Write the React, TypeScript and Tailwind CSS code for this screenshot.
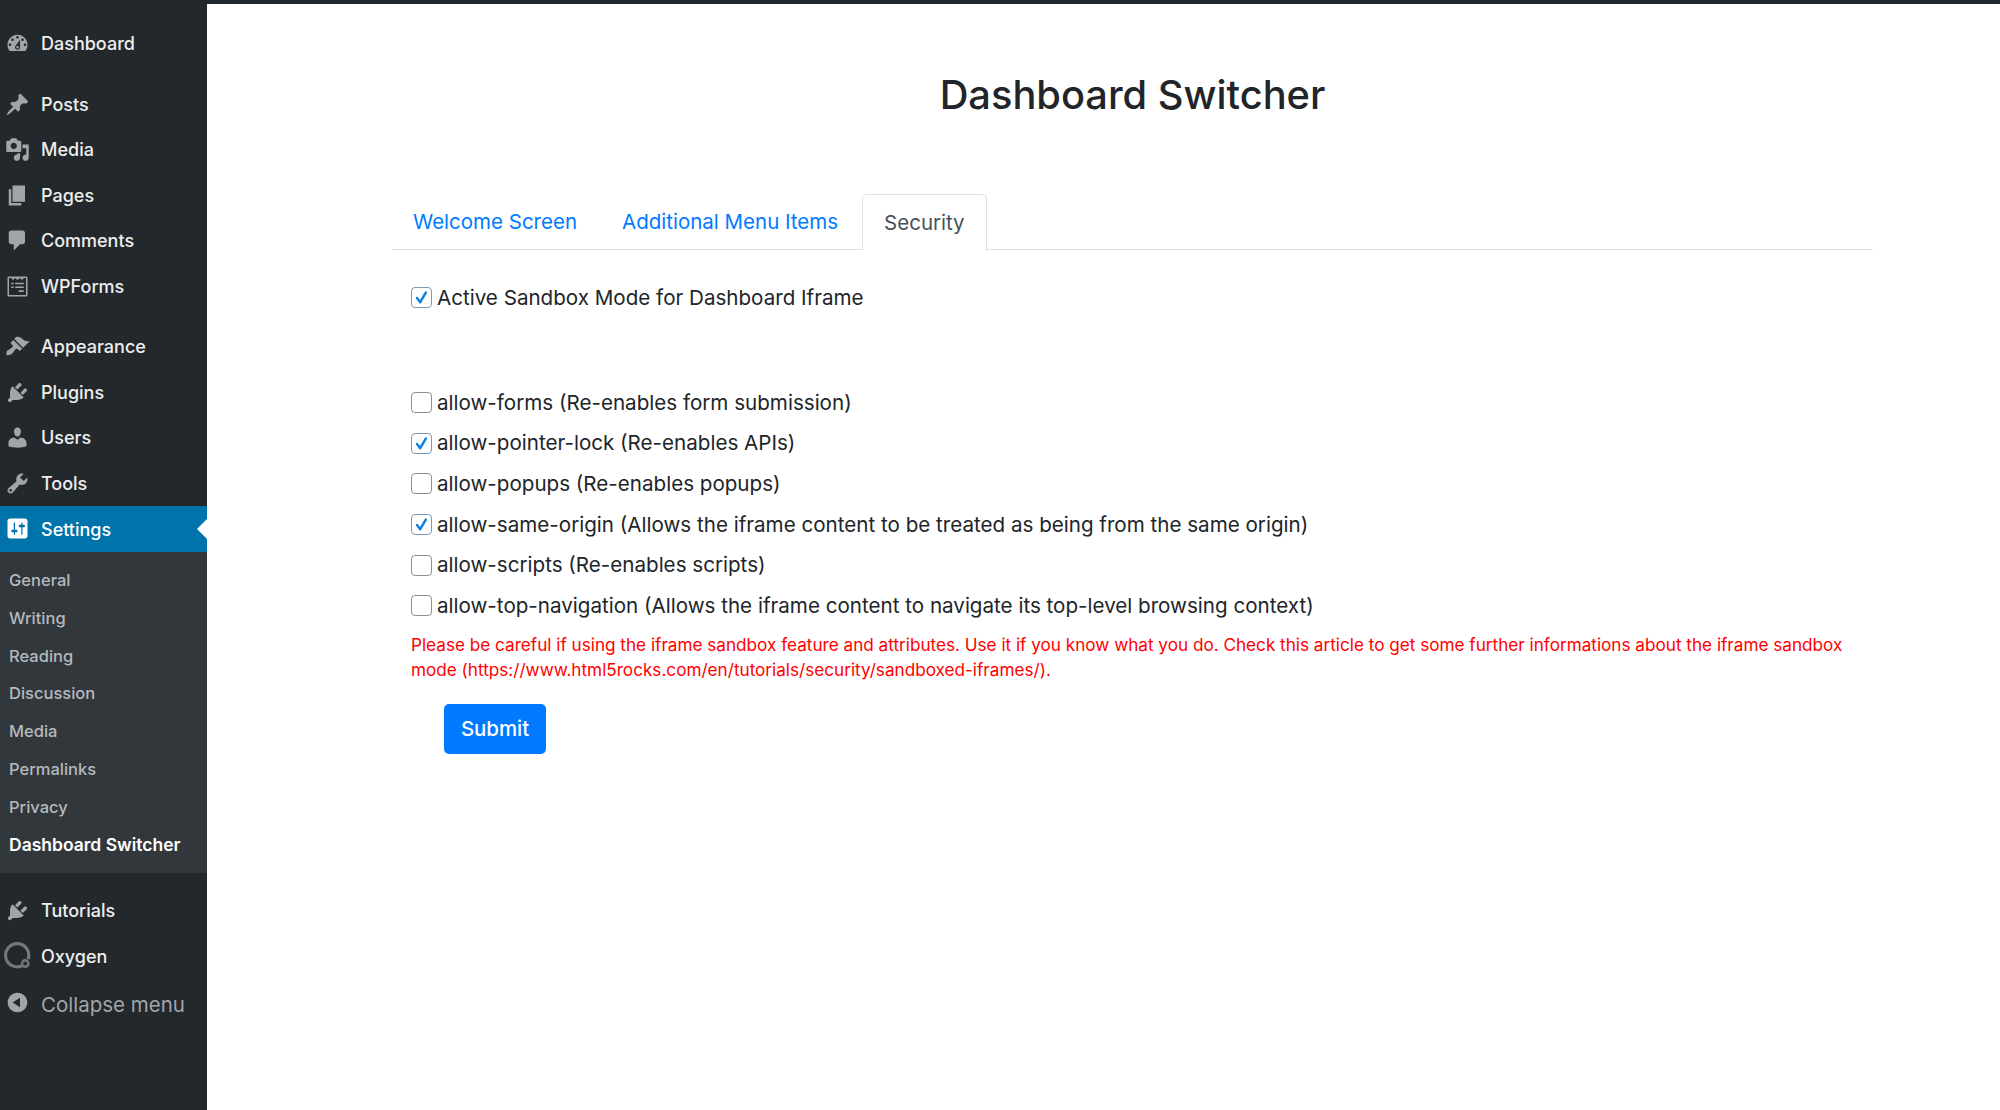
import React from "react";

const P: Record<string, string> = {
  dashboard: "M3.76 16h12.48c1.1-1.37 1.76-3.11 1.76-5 0-4.42-3.58-8-8-8s-8 3.58-8 8c0 1.89.66 3.63 1.76 5zM10 4c.55 0 1 .45 1 1s-.45 1-1 1-1-.45-1-1 .45-1 1-1zM6 6c.55 0 1 .45 1 1s-.45 1-1 1-1-.45-1-1 .45-1 1-1zm8 0c.55 0 1 .45 1 1s-.45 1-1 1-1-.45-1-1 .45-1 1-1zm-5.37 5.55L12 7v6c0 1.1-.9 2-2 2s-2-.9-2-2c0-.57.24-1.08.63-1.45zM4 10c.55 0 1 .45 1 1s-.45 1-1 1-1-.45-1-1 .45-1 1-1zm12 0c.55 0 1 .45 1 1s-.45 1-1 1-1-.45-1-1 .45-1 1-1zm-5 3c0-.55-.45-1-1-1s-1 .45-1 1 .45 1 1 1 1-.45 1-1z",
  pin: "M10.44 3.02l1.82-1.82 6.36 6.35-1.83 1.82c-1.05-.68-2.48-.57-3.41.36l-.75.75c-.92.93-1.04 2.35-.35 3.41l-1.83 1.82-2.41-2.41-2.8 2.79c-.42.42-3.38 2.71-3.8 2.29s1.86-3.39 2.28-3.81l2.79-2.79L4.1 9.36l1.83-1.82c1.05.69 2.48.57 3.41-.36l.75-.75c.93-.92 1.04-2.35.35-3.41z",
  media: "M13 11V4c0-.55-.45-1-1-1h-1.67L9 1H5L3.67 3H2c-.55 0-1 .45-1 1v7c0 .55.45 1 1 1h10c.55 0 1-.45 1-1zM7 4.5c1.38 0 2.5 1.12 2.5 2.5S8.38 9.5 7 9.5 4.5 8.38 4.5 7 5.62 4.5 7 4.5zM14 6h5v10.5c0 1.38-1.12 2.5-2.5 2.5S14 17.88 14 16.5s1.12-2.5 2.5-2.5c.17 0 .34.02.5.05V9h-3V6zm-4 8.05V13h2v3.5c0 1.38-1.12 2.5-2.5 2.5S7 17.88 7 16.5 8.12 14 9.5 14c.17 0 .34.02.5.05z",
  page: "M6 15V2h10v13H6zm-1 1h8v2H3V5h2v11z",
  comments: "M5 2h9c1.1 0 2 .9 2 2v7c0 1.1-.9 2-2 2h-2l-5 5v-5H5c-1.1 0-2-.9-2-2V4c0-1.1.9-2 2-2z",
  wpforms: "M3 2h14a1 1 0 0 1 1 1v14a1 1 0 0 1-1 1H3a1 1 0 0 1-1-1V3a1 1 0 0 1 1-1zm.2 1.2v13.6h13.6V3.2h-1.6l-1.7 1.6L12 3.2l-2 1.6-2-1.6-1.5 1.6-1.7-1.6H3.2zM5 7h2v1.2H5V7zm3.2 0H15v1.2H8.2V7zM5 10h2v1.2H5V10zm3.2 0H15v1.2H8.2V10zM11 13h4v1.4h-4V13z",
  appearance: "M14.48 11.06L7.41 3.99l1.5-1.5c.5-.56 2.3-.47 3.51.32 1.21.8 1.43 1.28 2.91 2.1 1.18.64 2.45 1.26 4.45.85zm-.71.71L6.7 4.7 4.93 6.47c-.39.39-.39 1.02 0 1.41l1.06 1.06c.39.39.39 1.03 0 1.42-.6.6-1.43 1.11-2.21 1.69-.35.26-.7.53-1.01.84C1.43 13.23.76 14.8 1.2 16.8c2 .44 3.57-.23 4.91-1.57.31-.31.58-.66.84-1.01.58-.78 1.09-1.61 1.69-2.21.39-.39 1.02-.39 1.41 0l1.06 1.06c.39.39 1.02.39 1.41 0z",
  plugins: "M13.11 4.36L9.87 7.6 8 5.73l3.24-3.24c.35-.34 1.05-.2 1.56.32.52.51.66 1.21.31 1.55zm-8 1.77l.91-1.12 9.01 9.01-1.19.84c-.71.71-2.63 1.16-3.82 1.16H6.14L4.9 17.26c-.59.59-1.54.59-2.12 0-.59-.58-.59-1.53 0-2.12l1.24-1.24v-3.88c0-1.13.4-3.19 1.09-3.89zm7.26 3.97l3.24-3.24c.34-.35 1.04-.21 1.55.31.52.51.66 1.21.31 1.55l-3.24 3.25z",
  users: "M10 9.25c-2.27 0-2.73-3.44-2.73-3.44C7 4.02 7.82 2 9.97 2c2.16 0 2.98 2.02 2.71 3.81 0 0-.41 3.44-2.68 3.44zm0 2.57L12.72 10c2.39 0 4.52 2.33 4.52 4.53v2.49s-3.65 1.13-7.24 1.13c-3.65 0-7.24-1.13-7.24-1.13v-2.49c0-2.25 1.94-4.48 4.47-4.48z",
  tools: "M16.68 9.77c-1.34 1.34-3.3 1.67-4.95.99l-5.41 6.52c-.99.99-2.59.99-3.58 0s-.99-2.59 0-3.57l6.52-5.42c-.68-1.65-.35-3.61.99-4.95 1.28-1.28 3.12-1.62 4.72-1.06l-2.89 2.89 2.82 2.82 2.86-2.87c.53 1.58.18 3.39-1.08 4.65zM3.81 16.21c.4.39 1.04.39 1.43 0 .4-.4.4-1.04 0-1.43-.39-.4-1.03-.4-1.43 0-.39.39-.39 1.03 0 1.43z",
  settings: "M18 16V4c0-1.1-.9-2-2-2H4c-1.1 0-2 .9-2 2v12c0 1.1.9 2 2 2h12c1.1 0 2-.9 2-2zM8 11h1c.55 0 1 .45 1 1s-.45 1-1 1H8v1.5c0 .28-.22.5-.5.5s-.5-.22-.5-.5V13H6c-.55 0-1-.45-1-1s.45-1 1-1h1V5.5c0-.28.22-.5.5-.5s.5.22.5.5V11zm5-2h-1c-.55 0-1-.45-1-1s.45-1 1-1h1V5.5c0-.28.22-.5.5-.5s.5.22.5.5V7h1c.55 0 1 .45 1 1s-.45 1-1 1h-1v5.5c0 .28-.22.5-.5.5s-.5-.22-.5-.5V9z",
  collapse: "M10 2.16c4.33 0 7.84 3.51 7.84 7.84s-3.51 7.84-7.84 7.84S2.16 14.33 2.16 10 5.71 2.16 10 2.16zm2 11.72V6.12L6.18 9.97z",
};

function Icon({ d, active, className }: { d: string; active?: boolean; className?: string }) {
  return (
    <svg viewBox="0 0 20 20" className={`w-[25px] h-[25px] shrink-0 ${active ? "text-white" : "text-[#a0a5aa]"} ${className ?? ""}`} fill="currentColor" fillRule="evenodd">
      <path d={P[d]} />
    </svg>
  );
}

function OxygenIcon() {
  return (
    <svg viewBox="0 0 26 26" className="w-[28px] h-[28px] shrink-0 text-[#73787d]" fill="none" stroke="currentColor">
      <path d="M18.6 21.6A10.8 10.8 0 1 1 23.3 16" strokeWidth="2.9" />
      <circle cx="20.6" cy="20" r="3" strokeWidth="2.2" />
    </svg>
  );
}

function Row({ icon, label, active }: { icon: string; label: string; active?: boolean }) {
  return (
    <div className={`relative flex items-center h-[45.5px] pl-[5px] gap-[11px] text-[18px] font-medium ${active ? "bg-[#0073aa] text-white" : "text-[#eeeeee]"}`}>
      <Icon d={icon} active={active} />
      <span className={active ? "mt-[1px]" : ""}>{label}</span>
      {active && (
        <span className="absolute right-0 top-1/2 -translate-y-1/2 w-0 h-0 border-y-[10px] border-y-transparent border-r-[10px] border-r-white" />
      )}
    </div>
  );
}

function Box({ checked }: { checked?: boolean }) {
  return (
    <span className={`flex items-center justify-center w-[21px] h-[21px] shrink-0 rounded-[4px] border-[1.5px] bg-white ${checked ? "border-[#7d99b5]" : "border-[#8f8f8f]"}`}>
      {checked && (
        <svg viewBox="0 0 16 16" className="w-[15px] h-[15px]" fill="none" stroke="#0b80e0" strokeWidth="2.6" strokeLinecap="round" strokeLinejoin="round">
          <path d="M3.2 8.6 6.6 13 12.6 2.8" />
        </svg>
      )}
    </span>
  );
}

function Check({ checked, label, className }: { checked?: boolean; label: string; className?: string }) {
  return (
    <div className={`flex items-center gap-[5px] h-[30px] ${className ?? ""}`}>
      <Box checked={checked} />
      <span>{label}</span>
    </div>
  );
}

const subs = ["General", "Writing", "Reading", "Discussion", "Media", "Permalinks", "Privacy"];

export default function App() {
  return (
    <div className="flex w-[2000px] h-[1110px] overflow-hidden bg-white font-['Inter','Liberation_Sans',sans-serif]">
      <aside className="w-[207px] shrink-0 bg-[#23282d] pt-[21px]">
        <Row icon="dashboard" label="Dashboard" />
        <div className="mt-[15px]">
          <Row icon="pin" label="Posts" />
          <Row icon="media" label="Media" />
          <Row icon="page" label="Pages" />
          <Row icon="comments" label="Comments" />
          <Row icon="wpforms" label="WPForms" />
        </div>
        <div className="mt-[15px]">
          <Row icon="appearance" label="Appearance" />
          <Row icon="plugins" label="Plugins" />
          <Row icon="users" label="Users" />
          <Row icon="tools" label="Tools" />
          <Row icon="settings" label="Settings" active />
        </div>
        <div className="bg-[#32373c] pt-[10px] pb-[9px] text-[16.5px] font-medium text-[#b4b9be]">
          {subs.map((s) => (
            <div key={s} className="flex items-center h-[37.8px] pl-[9px]">{s}</div>
          ))}
          <div className="flex items-center h-[37.8px] pl-[9px] text-[17.5px] text-white font-semibold">Dashboard Switcher</div>
        </div>
        <div className="mt-[15px]">
          <Row icon="plugins" label="Tutorials" />
          <div className="flex items-center h-[45.5px] pl-[3px] gap-[10px] text-[18px] font-medium text-[#eeeeee]">
            <OxygenIcon />
            <span className="mt-[1px]">Oxygen</span>
          </div>
          <div className="mt-[4px] flex items-center h-[45.5px] pl-[5px] gap-[11px] text-[20.5px] text-[#a0a5aa]">
            <Icon d="collapse" className="-mt-[6px]" />
            <span>Collapse menu</span>
          </div>
        </div>
      </aside>

      <main className="flex-1 min-w-0">
        <div className="h-[4px] bg-[#23282d]" />
        <div className="ml-[185px] w-[1481px] text-[20.6px] leading-[30px] text-[#212529]">
          <h1 className="mt-[66px] text-center text-[39.8px] leading-[49px] font-medium">Dashboard Switcher</h1>
          <nav className="mt-[74px] h-[57px] flex items-end border-b-[1.5px] border-[#dee2e6] text-[20.5px]">
            <a className="h-[54px] flex items-center px-[21px] text-[#007bff]">Welcome Screen</a>
            <a className="h-[54px] flex items-center px-[24px] text-[#007bff]">Additional Menu Items</a>
            <a className="h-[57px] pt-[1px] -mb-[1.5px] flex items-center px-[21px] text-[#495057] bg-white border-[1.5px] border-[#dee2e6] border-b-white rounded-t-[5px]">Security</a>
          </nav>
          <div className="pl-[19px]">
            <Check checked label="Active Sandbox Mode for Dashboard Iframe" className="mt-[32.5px]" />
            <div className="mt-[75px] flex flex-col gap-[10.7px]">
              <Check label="allow-forms (Re-enables form submission)" />
              <Check checked label="allow-pointer-lock (Re-enables APIs)" />
              <Check label="allow-popups (Re-enables popups)" />
              <Check checked label="allow-same-origin (Allows the iframe content to be treated as being from the same origin)" />
              <Check label="allow-scripts (Re-enables scripts)" />
              <Check label="allow-top-navigation (Allows the iframe content to navigate its top-level browsing context)" />
            </div>
            <p className="mt-[11.5px] text-[17.15px] leading-[25px] text-[#ff0000]">
              Please be careful if using the iframe sandbox feature and attributes. Use it if you know what you do. Check this article to get some further informations about the iframe sandbox mode (https://www.html5rocks.com/en/tutorials/security/sandboxed-iframes/).
            </p>
            <button className="mt-[22px] ml-[33px] w-[102px] h-[50px] rounded-[5px] bg-[#007bff] text-white font-medium text-[20.4px]">Submit</button>
          </div>
        </div>
      </main>
    </div>
  );
}
